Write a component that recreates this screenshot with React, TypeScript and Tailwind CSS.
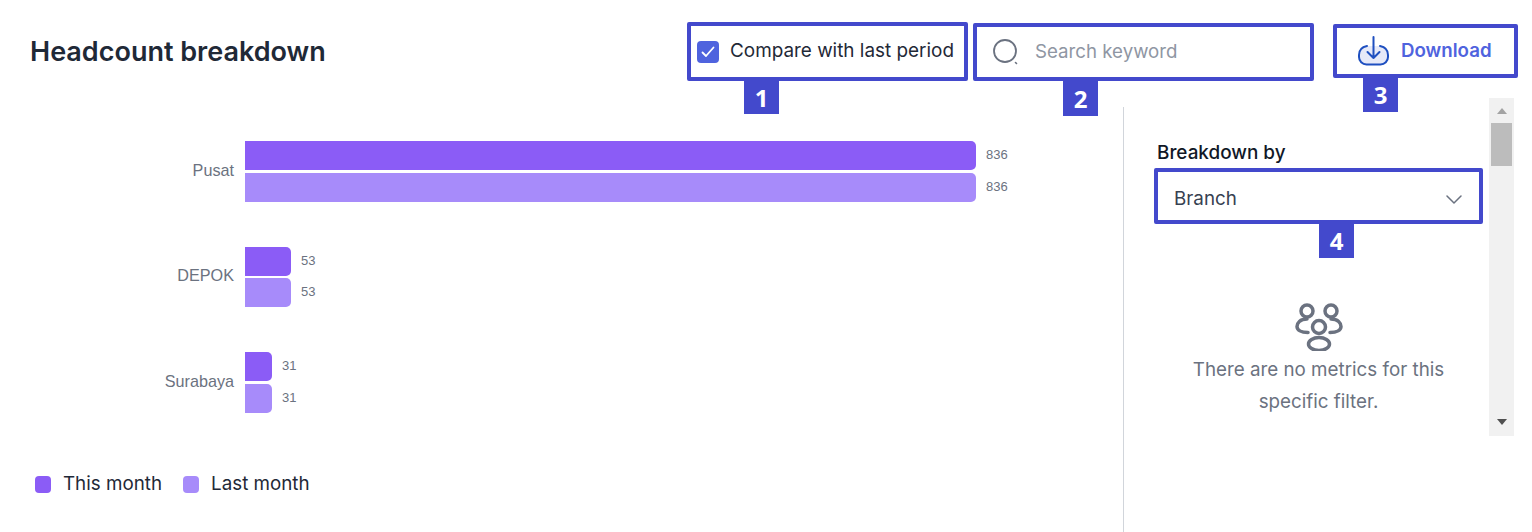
import React from 'react';

const chartRows = [
  { label: 'Pusat', value: 836, width: 'w-[731px]', gap: 'gap-[3px]', mb: 'mb-[45px]' },
  { label: 'DEPOK', value: 53, width: 'w-[46px]', gap: 'gap-[2px]', mb: 'mb-[45px]' },
  { label: 'Surabaya', value: 31, width: 'w-[27px]', gap: 'gap-[3px]', mb: 'mb-0' },
];

const Badge = ({ n, className }: { n: number; className: string }) => (
  <span
    className={`absolute top-[calc(100%+4px)] flex w-[35px] items-center justify-center bg-[#4349cc] font-['Open_Sans',sans-serif] text-2xl font-bold text-white ${className}`}
  >
    {n}
  </span>
);

const Bar = ({ value, width, color }: { value: number; width: string; color: string }) => (
  <div className="flex h-[29px] items-center">
    <div className={`h-full rounded-r-[5px] ${width} ${color}`} />
    <span className="ml-[10px] pb-[1px] font-['Liberation_Sans',sans-serif] text-[13px] text-[#6b7280]">{value}</span>
  </div>
);

const App = () => {
  return (
    <div className="flex h-[532px] w-[1532px] flex-col overflow-hidden bg-white font-['Inter',sans-serif]">
      {/* Header */}
      <header className="flex h-[98px] shrink-0 items-start pl-[30px] pr-[14px] pt-[22px]">
        <h1 className="flex-1 pt-[10px] text-[27px] font-semibold leading-[40px] text-[#1f2937]">
          Headcount breakdown
        </h1>
        <div className="relative flex h-[59px] w-[281px] items-center rounded-[2px] border-4 border-[#4349cc] pl-[6px]">
          <span className="flex h-[22px] w-[22px] items-center justify-center rounded-[4px] bg-[#4f63de]">
            <svg width="16" height="16" viewBox="0 0 16 16" fill="none" stroke="white" strokeWidth="1.8" strokeLinecap="round" strokeLinejoin="round">
              <path d="M2.500 8.500 6 12 13.500 3.500" />
            </svg>
          </span>
          <span className="ml-[11px] whitespace-nowrap text-[18.9px] text-[#1f2937]">Compare with last period</span>
          <Badge n={1} className="left-[53px] h-[33px]" />
        </div>
        <div className="relative ml-[5px] mt-[1px] flex h-[58px] w-[341px] items-center rounded-[2px] border-4 border-[#4349cc] pl-[16px]">
          <svg width="26" height="26" viewBox="0 0 26 26" fill="none" stroke="#6b7280" strokeLinecap="round">
            <circle cx="12" cy="12" r="11" strokeWidth="1.8" />
            <path d="M22.500 23.500 23.500 24.500" strokeWidth="1.6" />
          </svg>
          <span className="ml-[16px] text-[18.7px] text-[#8f96a3]">Search keyword</span>
          <Badge n={2} className="left-[86px] h-[35px]" />
        </div>
        <div className="relative ml-[19px] mt-[2px] flex h-[54px] w-[185px] items-center rounded-[2px] border-4 border-[#4349cc] pl-[21px]">
          <svg width="31" height="30" viewBox="0 0 31 30" fill="none" strokeLinecap="round" strokeLinejoin="round">
            <path d="M9 10C4 11 1 14 1 19v2a7.500 7.500 0 0 0 7.500 7.500h14A7.500 7.500 0 0 0 30 21v-2c0-5-3-8-8-9" fill="#e6e9f8" stroke="#1e4fc0" strokeWidth="2" />
            <path d="M15.500 1v21M9.500 16l6 6 6-6" stroke="#1e4fc0" strokeWidth="2" />
          </svg>
          <span className="ml-[12px] text-[18.7px] font-semibold text-[#4f63de]">Download</span>
          <Badge n={3} className="left-[26px] h-[34px] w-[33px]" />
        </div>
      </header>

      <div className="flex flex-1">
        {/* Chart */}
        <section className="flex w-[1123px] shrink-0 flex-col">
          <div className="pt-[43px]">
            {chartRows.map((row) => (
              <div key={row.label} className={`flex items-center ${row.mb}`}>
                <span className="w-[234px] pb-[3px] text-right font-['Liberation_Sans',sans-serif] text-[16.2px] text-[#6b7280]">{row.label}</span>
                <div className={`ml-[11px] flex flex-col ${row.gap}`}>
                  <Bar value={row.value} width={row.width} color="bg-[#8b5cf6]" />
                  <Bar value={row.value} width={row.width} color="bg-[#a78bfa]" />
                </div>
              </div>
            ))}
          </div>
          <div className="flex items-center pl-[35px] pt-[57px] text-[18.8px] text-[#1f2937]">
            <span className="h-[17px] w-[16px] rounded-[4px] bg-[#8b5cf6]" />
            <span className="ml-[12px]">This month</span>
            <span className="ml-[21px] h-[17px] w-[16px] rounded-[4px] bg-[#a78bfa]" />
            <span className="ml-[12px]">Last month</span>
          </div>
        </section>

        {/* Side panel */}
        <aside className="mt-[9px] w-[366px] shrink-0 border-l border-[#d1d5db] pl-[30px] pr-[5px]">
          <p className="pl-[3px] pt-[34px] text-[18.9px] font-medium leading-[24px] text-[#111827]">Breakdown by</p>
          <div className="relative mt-[3px] flex h-[56px] w-[329px] items-center justify-between rounded-[2px] border-4 border-[#4349cc] pl-[16px] pr-[17px] pt-[6px]">
            <span className="text-[18.8px] text-[#374151]">Branch</span>
            <svg width="16" height="9" viewBox="0 0 16 9" fill="none" stroke="#6b7280" strokeWidth="1.5" strokeLinecap="round" strokeLinejoin="round">
              <path d="M1 1l7 7 7-7" />
            </svg>
            <Badge n={4} className="left-[161px] h-[34px]" />
          </div>
          <div className="flex w-[329px] flex-col items-center pt-[79px]">
            <svg width="48" height="48" viewBox="0 0 48 48" fill="none" stroke="#6b7280" strokeWidth="3.500" strokeLinecap="round">
              <circle cx="12" cy="8" r="6" />
              <circle cx="36" cy="8" r="6" />
              <circle cx="24" cy="24" r="6.500" />
              <ellipse cx="24" cy="41" rx="10.500" ry="6.500" />
              <path d="M12 16C5 16 2 20 2 23.500 2 27 6 29.500 13 29.500" />
              <path d="M36 16C43 16 46 20 46 23.500 46 27 42 29.500 35 29.500" />
            </svg>
            <p className="mt-[3px] w-[290px] text-center text-[18.8px] leading-[32px] text-[#6b7280]">
              There are no metrics for this specific filter.
            </p>
          </div>
        </aside>

        {/* Scrollbar */}
        <div className="flex h-[338px] w-[25px] shrink-0 flex-col items-center bg-[#f1f1f1] pt-[10px]">
          <span className="h-0 w-0 border-x-[5.500px] border-b-[6px] border-x-transparent border-b-[#a3a3a3]" />
          <span className="mt-[9px] h-[43px] w-[21px] bg-[#bcbcbc]" />
          <span className="mt-[253px] h-0 w-0 border-x-[5.500px] border-t-[6px] border-x-transparent border-t-[#505050]" />
        </div>
      </div>
    </div>
  );
};

export default App;
